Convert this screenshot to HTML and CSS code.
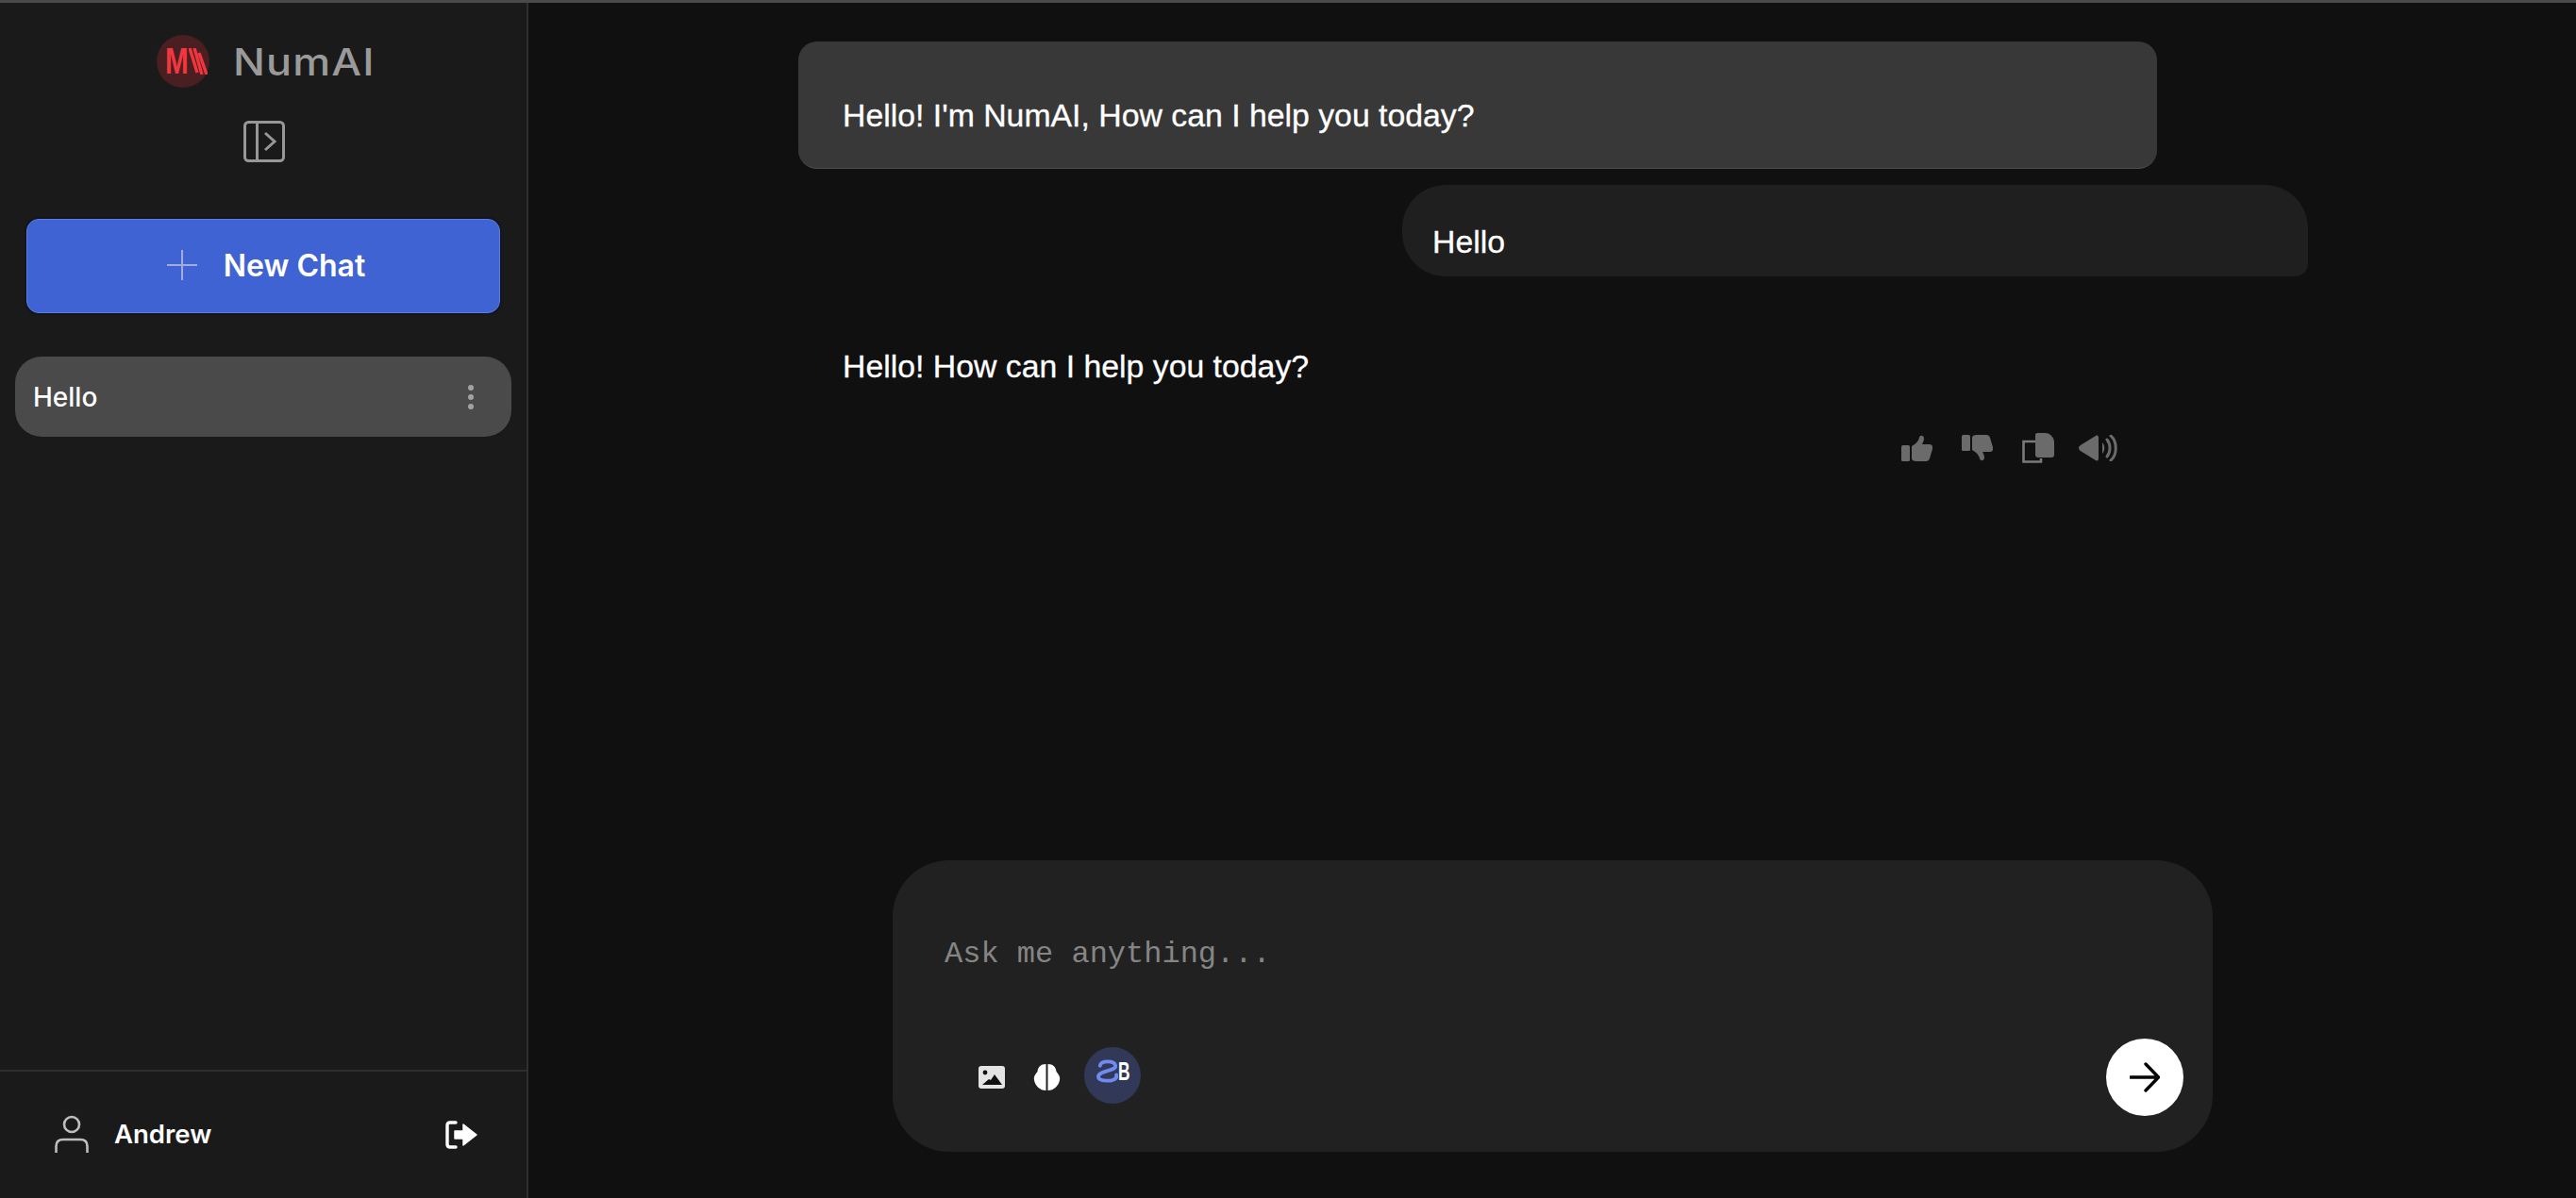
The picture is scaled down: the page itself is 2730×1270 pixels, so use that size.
FILE: index.html
```html
<!DOCTYPE html>
<html lang="en">
<head>
<meta charset="utf-8">
<title>NumAI</title>
<link rel="stylesheet" href="styles.css">
</head>
<body>
<div class="app">
  <aside class="sidebar">
    <div class="brand">
      <div class="logo-mark">
        <span class="logo-m">M</span>
        <svg class="logo-slashes" viewBox="0 0 20 28"><path d="M1 0 L9 26 M6 0 L14 28 M11 5 L19 28" fill="none" stroke="#f0353d" stroke-width="3.400"/></svg>
      </div>
      <span class="brand-name">NumAI</span>
    </div>
    <button class="toggle" aria-label="Toggle sidebar">
      <svg viewBox="0 0 44 44" class="toggle-icon"><rect x="1.5" y="1.5" width="41" height="41" rx="4" fill="none" stroke="#979797" stroke-width="3"/><path d="M14.5 2 V42" stroke="#979797" stroke-width="3"/><path d="M23 13 L33 22 L23 31" fill="none" stroke="#979797" stroke-width="3"/></svg>
    </button>
    <button class="new-chat">
      <svg class="plus" viewBox="0 0 32 32"><path d="M16 0 V32 M0 16 H32" stroke="#a4abd6" stroke-width="2"/></svg>
      <span>New Chat</span>
    </button>
    <div class="chat-item">
      <span>Hello</span>
      <span class="dots"><i></i><i></i><i></i></span>
    </div>
    <div class="account">
      <div class="user">
        <svg class="user-icon" viewBox="0 0 36 40"><circle cx="18" cy="10" r="8" fill="none" stroke="#bdbdbd" stroke-width="2.6"/><path d="M1.5 40 V33 C1.5 28 5 26 9 26 H27 C31 26 34.5 28 34.5 33 V40" fill="none" stroke="#bdbdbd" stroke-width="2.6"/></svg>
        <span>Andrew</span>
      </div>
      <svg class="logout" viewBox="0 0 34 30"><path d="M11 2 H5 C3 2 2 3 2 5 V25 C2 27 3 28 5 28 H11" fill="none" stroke="#fff" stroke-width="3.4" stroke-linecap="round"/><path d="M10 11 H19 V4 L33 15 L19 26 V19 H10 Z" fill="#fff" stroke="#fff" stroke-linejoin="round" stroke-width="1.5"/></svg>
    </div>
  </aside>

  <main class="main">
    <section class="thread">
      <div class="bubble-ai">Hello! I'm NumAI, How can I help you today?</div>
      <div class="bubble-user">Hello</div>
      <div class="reply">
        <p class="reply-text">Hello! How can I help you today?</p>
        <div class="actions">
          <svg class="act act-thumb" viewBox="0 0 33 28"><rect y="11" width="9" height="17" rx="1.5"/><path d="M11 12 C15 10 18 7 19 3 C19.5 0 24 0 24 4 C24 6 23 8 22 10 H30 C33 10 33.5 13 33 15 L30 25 C29.5 27 28 28 26 28 H16 C13 28 11 27 11 25 Z"/></svg>
          <svg class="act act-thumb" viewBox="0 0 33 28"><g transform="matrix(1 0 0 -1 0 28)"><rect y="11" width="9" height="17" rx="1.5"/><path d="M11 12 C15 10 18 7 19 3 C19.5 0 24 0 24 4 C24 6 23 8 22 10 H30 C33 10 33.5 13 33 15 L30 25 C29.5 27 28 28 26 28 H16 C13 28 11 27 11 25 Z"/></g></svg>
          <svg class="act act-copy" viewBox="0 0 34 32"><path d="M14 9 H1.5 V30.5 H20 V27" fill="none" stroke="#7a7a7a" stroke-width="2.600"/><path d="M14 2 C14 1 15 0 16 0 H24 C30 0 34 5 34 10 V23 C34 25 33 26 31 26 H17 C15 26 14 25 14 23 Z"/></svg>
          <svg class="act act-sound" viewBox="0 0 42 28"><path d="M0 14 C0 12 3 10 5 9 L18 1 C20 0 21 1 21 3 V25 C21 27 20 28 18 27 L5 19 C3 18 0 16 0 14Z"/><path d="M25 8 C28 11 28 17 25 20 Z"/><path d="M30 5 C34 10 34 18 30 23 M34 1 C41 7 41 21 34 27" fill="none" stroke="#6b6b6b" stroke-width="3" stroke-linecap="round"/></svg>
        </div>
      </div>
    </section>

    <section class="composer">
      <div class="placeholder">Ask me anything...</div>
      <div class="toolbar">
        <div class="tools">
          <svg class="tool-image" viewBox="0 0 28 24"><rect width="28" height="24" rx="3" fill="#e4e4e4"/><circle cx="7" cy="7" r="2.4" fill="#111"/><path d="M4 20 L11 14 L13 15 L17 9 L25 20 Z" fill="#111"/></svg>
          <svg class="tool-brain" viewBox="0 0 29 28"><path d="M13.500 0 C8 0 5 3 4.500 8 C2 11 0 14 1 17 C2 23 7 28 13.500 28 Z M15.500 0 C21 0 24 3 24.500 8 C27 11 29 14 28 17 C27 23 22 28 15.500 28 Z" fill="#fff"/></svg>
          <div class="tool-mode">
            <svg class="mode-glyph" viewBox="0 0 24 26"><path d="M4 7 C5 1 20 1 21 7 C22 13 3 12 2 19 C2 25 19 25 22 20 L22 17" fill="none" stroke="#6f8bf0" stroke-width="4" stroke-linecap="round"/></svg>
            <span class="mode-b">B</span>
          </div>
        </div>
        <button class="send" aria-label="Send">
          <svg class="send-icon" viewBox="0 0 32 32"><path d="M1 16 H30 M17 2 L30.500 16 L17 30" fill="none" stroke="#050505" stroke-width="3.400" stroke-linecap="round" stroke-linejoin="round"/></svg>
        </button>
      </div>
    </section>
  </main>
</div>
</body>
</html>
```
FILE: styles.css
```css
* { box-sizing: border-box; }

html, body { margin: 0; height: 100%; }

body {
  background: #101010;
  color: #fff;
  font-family: "Inter", "Liberation Sans", sans-serif;
  overflow: hidden;
}

.app {
  height: 1270px;
  display: flex;
  border-top: 3px solid #4a4a4a;
}

button {
  font: inherit;
  color: inherit;
  border: 0;
  background: none;
  padding: 0;
}

/* Sidebar */
.sidebar {
  width: 560px;
  flex: none;
  display: flex;
  flex-direction: column;
  background: #1a1a1a;
  border-right: 2px solid #2f2f2f;
}

.brand {
  margin-top: 34px;
  height: 56px;
  display: flex;
  align-items: center;
  gap: 25px;
  padding-left: 166px;
}

.logo-mark {
  width: 56px;
  height: 56px;
  flex: none;
  border-radius: 50%;
  background: #4a1f21;
  display: flex;
  align-items: center;
  padding-left: 9px;
}

.logo-m {
  width: 25px;
  flex: none;
  color: #f2373f;
  font: 700 38px/1 "Liberation Sans", sans-serif;
  transform: scaleX(0.78);
  transform-origin: left center;
}

.logo-slashes { width: 20px; height: 28px; flex: none; }

.brand-name {
  color: #9a9a9a;
  font: 500 39px/1 "Inter", sans-serif;
  letter-spacing: 1px;
  transform: scaleX(1.15);
  transform-origin: left center;
}

.toggle {
  align-self: center;
  margin-top: 35px;
  margin-left: 2px;
  width: 44px;
  height: 44px;
}

.toggle-icon { display: block; width: 44px; height: 44px; }

.new-chat {
  margin: 60px 28px 0;
  height: 100px;
  border-radius: 13px;
  background: #3f63d3;
  border: 1px solid #5c7ee0;
  box-shadow: 0 0 3px #04082a;
  display: flex;
  align-items: center;
  justify-content: center;
  gap: 28px;
  font-size: 32px;
  font-weight: 600;
  padding: 0 0 2px 6px;
}

.plus { width: 32px; height: 32px; }

.chat-item {
  margin: 46px 16px 0;
  height: 85px;
  padding: 0 40px 0 19px;
  border-radius: 28px;
  background: #4a4a4a;
  display: flex;
  align-items: center;
  justify-content: space-between;
  font-size: 28px;
  font-weight: 500;
}

.dots {
  display: flex;
  flex-direction: column;
  gap: 4px;
}

.dots i {
  width: 6px;
  height: 6px;
  border-radius: 50%;
  background: #a2a2a2;
}

.account {
  margin-top: auto;
  height: 136px;
  padding: 0 50px 3px 58px;
  border-top: 2px solid #2d2d2d;
  display: flex;
  align-items: center;
  justify-content: space-between;
}

.user {
  display: flex;
  align-items: center;
  gap: 27px;
  font-size: 27.5px;
  font-weight: 600;
}

.user-icon { width: 36px; height: 40px; }

.logout { width: 34px; height: 30px; margin: 3px 2px 0 0; }

/* Main */
.main {
  flex: 1;
  min-width: 0;
  display: flex;
  flex-direction: column;
  justify-content: space-between;
  padding: 41px 0 49px;
}

.thread {
  width: 1600px;
  margin-left: 286px;
  display: flex;
  flex-direction: column;
  font: 400 33.8px/44px "Liberation Sans", sans-serif;
  -webkit-text-stroke: 0.3px #fff;
}

.bubble-ai {
  width: 1440px;
  height: 135px;
  padding: 56px 47px 0;
  border-radius: 20px;
  background: #383838;
  border-bottom: 1px solid #4b4b4b;
}

.bubble-user {
  align-self: flex-end;
  width: 960px;
  height: 97px;
  margin-top: 17px;
  padding: 38px 32px 0;
  border-radius: 46px 46px 14px 46px;
  background: #1f1f1f;
}

.reply {
  width: 1440px;
  padding: 73px 41px 0 47px;
}

.reply-text { margin: 0; }

.actions {
  margin-top: 49px;
  display: flex;
  justify-content: flex-end;
  align-items: center;
}

.act { fill: #6b6b6b; height: 28px; }
.act-thumb { width: 33px; margin-right: 31px; }
.act-copy { width: 34px; height: 32px; margin-right: 26px; }
.act-sound { width: 42px; }

.composer {
  width: 1399px;
  height: 309px;
  margin-left: 386px;
  padding: 78px 31px 38px 55px;
  border-radius: 60px;
  background: #212121;
  display: flex;
  flex-direction: column;
  justify-content: space-between;
}

.placeholder {
  color: #858585;
  font: 400 32px/44px "Liberation Mono", monospace;
}

.toolbar {
  display: flex;
  align-items: center;
  justify-content: space-between;
}

.tools {
  margin-left: 36px;
  display: flex;
  align-items: center;
}

.tool-image { width: 28px; height: 24px; margin-right: 30px; }
.tool-brain { width: 29px; height: 28px; margin-right: 25px; }

.tool-mode {
  width: 60px;
  height: 60px;
  margin-top: -5px;
  border-radius: 50%;
  background: #323958;
  display: flex;
  align-items: center;
  justify-content: center;
  padding-bottom: 8px;
}

.mode-glyph { width: 23px; height: 25px; flex: none; }

.mode-b {
  width: 12px;
  color: #fff;
  font: 700 28px/1 "Liberation Sans", sans-serif;
  transform: scaleX(0.62);
  transform-origin: left center;
}

.send {
  width: 82px;
  height: 82px;
  border-radius: 50%;
  background: #fff;
  display: flex;
  align-items: center;
  justify-content: center;
}

.send-icon { width: 32px; height: 32px; }
```
